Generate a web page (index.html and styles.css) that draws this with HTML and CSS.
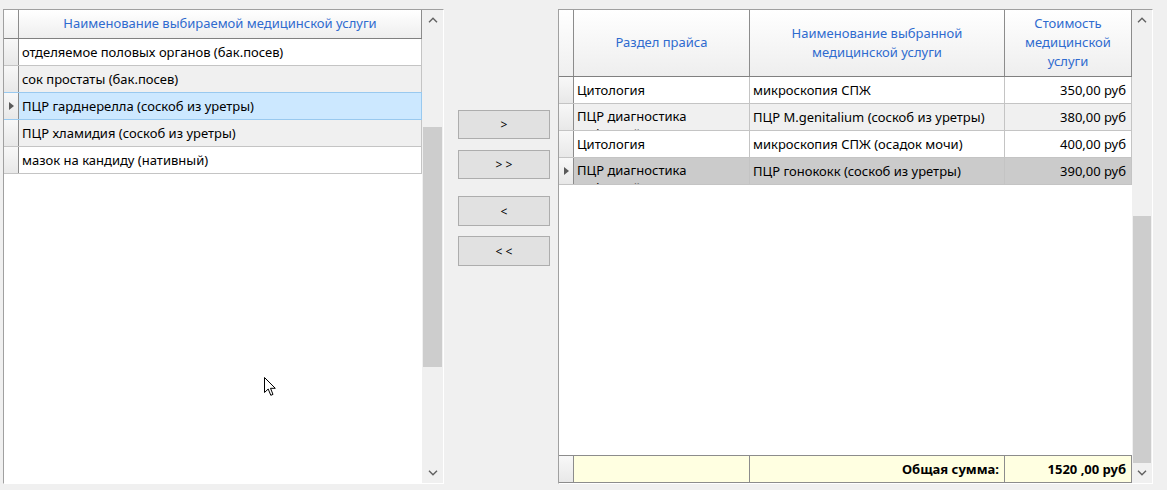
FILE: index.html
```html
<!DOCTYPE html>
<html lang="ru">
<head>
<meta charset="utf-8">
<title>Выбор медицинских услуг</title>
<link rel="stylesheet" href="styles.css">
</head>
<body>
<div class="window">
  <div class="grid grid-left">
    <div class="grid-body">
      <div class="hdr hdr-left">
        <div class="rh rh-corner"></div>
        <div class="hc hc-name">Наименование выбираемой медицинской услуги</div>
      </div>
      <div class="row row-white"><div class="rh"></div><div class="cell c-left">отделяемое половых органов (бак.посев)</div></div>
      <div class="row row-gray"><div class="rh"></div><div class="cell c-left">сок простаты (бак.посев)</div></div>
      <div class="row row-sel"><div class="rh rh-current"></div><div class="cell c-left">ПЦР гарднерелла (соскоб из уретры)</div></div>
      <div class="row row-gray"><div class="rh"></div><div class="cell c-left">ПЦР хламидия (соскоб из уретры)</div></div>
      <div class="row row-white"><div class="rh"></div><div class="cell c-left">мазок на кандиду (нативный)</div></div>
      <div class="empty"></div>
    </div>
    <div class="vscroll vscroll-left">
      <div class="sb-btn"><svg width="10" height="6" viewBox="0 0 10 6"><path d="M1 5.2 L5 1.2 L9 5.2" fill="none" stroke="#606060" stroke-width="1.4"/></svg></div>
      <div class="track"><div class="thumb thumb-left"></div></div>
      <div class="sb-btn"><svg width="10" height="6" viewBox="0 0 10 6"><path d="M1 0.8 L5 4.8 L9 0.8" fill="none" stroke="#606060" stroke-width="1.4"/></svg></div>
    </div>
  </div>

  <div class="mid">
    <div class="btn btn-a">&gt;</div>
    <div class="btn btn-b">&gt; &gt;</div>
    <div class="btn btn-c">&lt;</div>
    <div class="btn btn-d">&lt; &lt;</div>
  </div>

  <div class="grid grid-right">
    <div class="grid-body">
      <div class="hdr hdr-right">
        <div class="rh rh-corner"></div>
        <div class="hc col1">Раздел прайса</div>
        <div class="hc col2">Наименование выбранной<br>медицинской услуги</div>
        <div class="hc col3">Стоимость<br>медицинской<br>услуги</div>
      </div>
      <div class="row row-white">
        <div class="rh"></div>
        <div class="cell col1">Цитология</div>
        <div class="cell col2">микроскопия СПЖ</div>
        <div class="cell col3 num">350,00 руб</div>
      </div>
      <div class="row row-gray">
        <div class="rh"></div>
        <div class="cell col1 wrap">ПЦР диагностика<br>инфекций</div>
        <div class="cell col2">ПЦР M.genitalium (соскоб из уретры)</div>
        <div class="cell col3 num">380,00 руб</div>
      </div>
      <div class="row row-white">
        <div class="rh"></div>
        <div class="cell col1">Цитология</div>
        <div class="cell col2">микроскопия СПЖ (осадок мочи)</div>
        <div class="cell col3 num">400,00 руб</div>
      </div>
      <div class="row row-inactive">
        <div class="rh rh-current"></div>
        <div class="cell col1 wrap">ПЦР диагностика<br>инфекций</div>
        <div class="cell col2">ПЦР гонококк (соскоб из уретры)</div>
        <div class="cell col3 num">390,00 руб</div>
      </div>
      <div class="empty"></div>
      <div class="footer">
        <div class="rh"></div>
        <div class="cell col1"></div>
        <div class="cell col2 num">Общая сумма:</div>
        <div class="cell col3 num">1520 ,00 руб</div>
      </div>
    </div>
    <div class="vscroll vscroll-right">
      <div class="sb-btn"><svg width="10" height="6" viewBox="0 0 10 6"><path d="M1 5.2 L5 1.2 L9 5.2" fill="none" stroke="#606060" stroke-width="1.4"/></svg></div>
      <div class="track"><div class="thumb thumb-right"></div></div>
      <div class="sb-btn"><svg width="10" height="6" viewBox="0 0 10 6"><path d="M1 0.8 L5 4.8 L9 0.8" fill="none" stroke="#606060" stroke-width="1.4"/></svg></div>
    </div>
  </div>

  <svg class="cursor" width="13" height="20" viewBox="0 0 13 20"><path d="M0.5 0.5 L0.5 15.5 L4.2 12 L6.8 18.3 L9 17.4 L6.5 11.3 L11.3 11.3 Z" fill="#fff" stroke="#000" stroke-width="1" stroke-linejoin="miter"/></svg>
</div>
</body>
</html>
```

FILE: styles.css
```css
* { box-sizing: border-box; }

html, body {
  margin: 0;
  padding: 0;
  background: #f0f0f0;
}

body {
  font-family: "Noto Sans", "Open Sans", sans-serif;
  font-size: 13px;
  color: #000;
}

.window {
  position: relative;
  display: flex;
  align-items: flex-start;
  height: 490px;
  padding: 9px 0 0 3px;
}

/* ---------- grids ---------- */
.grid {
  display: flex;
  height: 475px;
  flex: none;
  background: #fff;
  border: 1px solid;
  border-color: #a0a0a0 #ffffff #ffffff #a0a0a0;
}
.grid-left { width: 441px; }
.grid-right { width: 595px; }

.grid-body {
  flex: 1;
  min-width: 0;
  display: flex;
  flex-direction: column;
}

.hdr {
  display: flex;
  flex: none;
  border-bottom: 1px solid #808080;
}
.hdr-left { height: 29px; }
.hdr-right { height: 67px; }

.rh {
  position: relative;
  flex: none;
  width: 15px;
  border-right: 1px solid #8c8c8c;
  background: linear-gradient(#f8f8f8, #e8e8e8);
}
.rh-corner {
  background: linear-gradient(#ffffff, #efefef);
}
.rh-current::after {
  content: "";
  position: absolute;
  left: 5px;
  top: 9px;
  border-left: 5px solid #5a5a5a;
  border-top: 4px solid transparent;
  border-bottom: 4px solid transparent;
}

.hc {
  display: flex;
  align-items: center;
  justify-content: center;
  text-align: center;
  color: #2f6bcf;
  line-height: 19px;
  background: linear-gradient(#ffffff, #eeeeee);
  border-right: 1px solid #8c8c8c;
  padding-bottom: 1px;
}
.hc-name { flex: 1; }

.row {
  display: flex;
  flex: none;
  height: 27px;
  border-bottom: 1px solid #c4c4c4;
}
.row-white { background: #ffffff; }
.row-gray { background: #f0f0f0; }
.row-sel { background: #cce8ff; }
.row-sel .cell { border-right-color: #99c9ef; }
.row-sel { border-bottom-color: #99c9ef; box-shadow: 0 -1px 0 #99c9ef; }
.row-inactive { background: #cbcbcb; }

.cell {
  display: flex;
  align-items: center;
  padding: 0 3px 1px 3px;
  white-space: nowrap;
  overflow: hidden;
  border-right: 1px solid #c4c4c4;
}
.c-left { flex: 1; }

.col1 { width: 176px; flex: none; }
.col2 { width: 255px; flex: none; }
.col3 { width: 127px; flex: none; }
.hdr .col1, .hdr .col2, .hdr .col3 { border-right-color: #8c8c8c; }

.num { justify-content: flex-end; padding-right: 5px; }

.wrap {
  display: block;
  white-space: normal;
  line-height: 18px;
  padding-top: 3px;
}

.empty {
  flex: 1;
  background: #fff;
}

.footer {
  display: flex;
  flex: none;
  height: 28px;
  border-top: 1px solid #8c8c8c;
  border-bottom: 1px solid #8c8c8c;
  font-weight: bold;
}
.footer .cell {
  background: #ffffe1;
  border-right-color: #8c8c8c;
}

/* ---------- scrollbars ---------- */
.vscroll {
  flex: none;
  display: flex;
  flex-direction: column;
  background: #f0f0f0;
}
.vscroll-left { width: 21px; }
.vscroll-right { width: 20px; }

.sb-btn {
  flex: none;
  height: 20px;
  display: flex;
  align-items: center;
  justify-content: center;
}
.track { flex: 1; }
.thumb {
  margin: 0 1px;
  background: #cdcdcd;
}
.thumb-left { margin-top: 97px; height: 240px; }
.thumb-right { margin-top: 186px; height: 247px; }

/* ---------- middle buttons ---------- */
.mid {
  flex: none;
  width: 114px;
  display: flex;
  flex-direction: column;
  padding: 101px 0 0 14px;
}
.btn {
  width: 92px;
  display: flex;
  align-items: center;
  justify-content: center;
  border: 1px solid #adadad;
  background: #e1e1e1;
  font-size: 12px;
  color: #000;
}
.btn-a { height: 29px; }
.btn-b { height: 29px; margin-top: 11px; }
.btn-c { height: 30px; margin-top: 17px; }
.btn-d { height: 30px; margin-top: 10px; }

/* ---------- mouse pointer overlay ---------- */
.cursor {
  position: absolute;
  left: 264px;
  top: 377px;
}
```
